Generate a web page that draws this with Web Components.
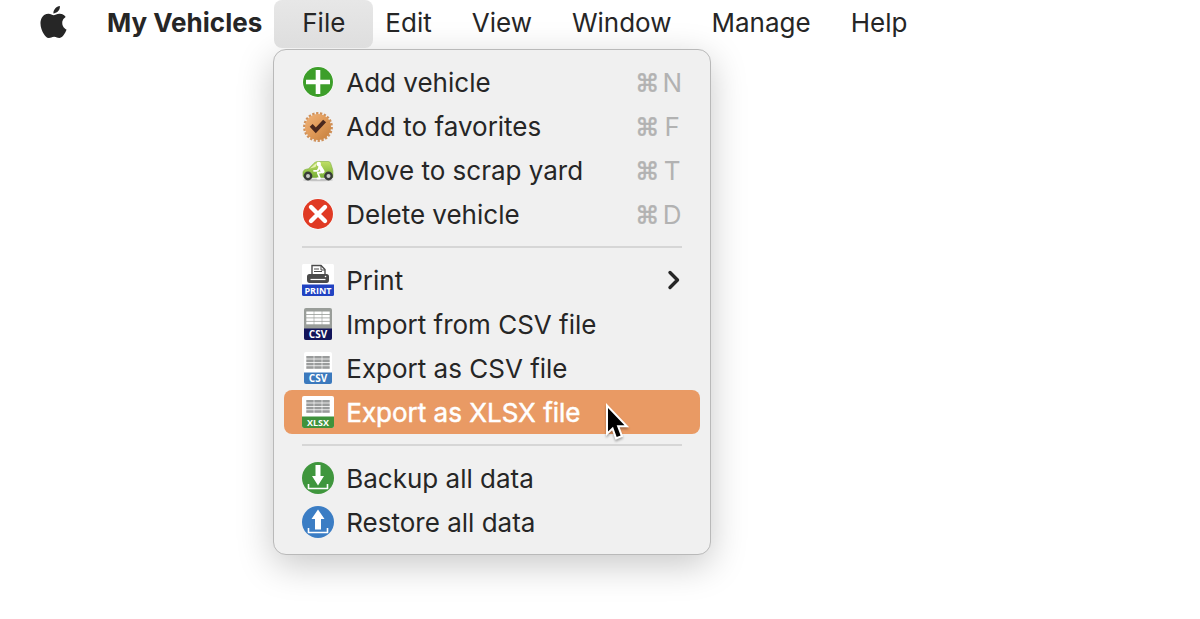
<!DOCTYPE html>
<html lang="en">
<head>
<meta charset="utf-8">
<meta name="viewport" content="width=device-width, initial-scale=1">
<title>My Vehicles</title>
<style>
  body {
    margin: 0;
    min-height: 100vh;
    background: #fff;
    color: #262626;
    font: 26px/44px Inter, "Liberation Sans", sans-serif;
  }
</style>
</head>
<body>
<menu-bar app="My Vehicles">
  <menu-title label="File" open>
    <drop-menu>
      <menu-item icon="add" key="N">Add vehicle</menu-item>
      <menu-item icon="favorite" key="F">Add to favorites</menu-item>
      <menu-item icon="scrap" key="T">Move to scrap yard</menu-item>
      <menu-item icon="delete" key="D">Delete vehicle</menu-item>
      <menu-rule></menu-rule>
      <menu-item icon="print" submenu>Print</menu-item>
      <menu-item icon="csv-in">Import from CSV file</menu-item>
      <menu-item icon="csv-out">Export as CSV file</menu-item>
      <menu-item icon="xlsx" active>Export as XLSX file</menu-item>
      <menu-rule></menu-rule>
      <menu-item icon="backup">Backup all data</menu-item>
      <menu-item icon="restore">Restore all data</menu-item>
    </drop-menu>
  </menu-title>
  <menu-title label="Edit"></menu-title>
  <menu-title label="View"></menu-title>
  <menu-title label="Window"></menu-title>
  <menu-title label="Manage"></menu-title>
  <menu-title label="Help"></menu-title>
</menu-bar>

<script>
const label = (text, size) =>
  `<text x="16" y="29.5" text-anchor="middle" font-family="Open Sans, sans-serif" font-weight="700" font-size="${size}" fill="#fff">${text}</text>`;

const cells = (fill, top) => [0, 3.4, 6.8, 10.2].map((y) =>
  [0, 8, 16].map((x) => `<rect x="${x + 4.3}" y="${y + top}" width="7.4" height="2.6" fill="${fill}"/>`).join("")
).join("");

const ICONS = {
  add: `<circle cx="16" cy="16" r="15.5" fill="#fff"/><circle cx="16" cy="16" r="15" fill="#3d9e2a"/>
    <path d="M16 4v24M4 16h24" stroke="#fff" stroke-width="4.6"/>`,
  favorite: `<defs><linearGradient id="g" x1="0" y1="0" x2="1" y2="1"><stop offset="0" stop-color="#f0b47c"/><stop offset=".5" stop-color="#e09a58"/><stop offset="1" stop-color="#c47e3c"/></linearGradient></defs>
    <circle cx="16" cy="17" r="13.4" fill="none" stroke="#cf9059" stroke-width="3" pathLength="88" stroke-dasharray="2.4 1.6"/>
    <circle cx="16" cy="17" r="13" fill="url(#g)"/>
    <path d="M9.200 15.400l4.600 5 8.800-9.400" fill="none" stroke="#4a281e" stroke-width="4"/>`,
  scrap: `<defs><linearGradient id="g" x1="0" y1="0" x2="0" y2="1"><stop offset="0" stop-color="#c0df66"/><stop offset="1" stop-color="#78b138"/></linearGradient></defs>
    <ellipse cx="16" cy="26" rx="15" ry="1.3" fill="#c4c4c4"/>
    <path d="M1 22v-4c.5-2 2-2.8 5.500-3.200L12 9.200C13.500 7.700 15 7.500 17 7.500h9c1.800 0 2.200.7 2.800 2.200L30.500 15c.6 2 .5 5.500.3 8.500H2z" fill="url(#g)" stroke="#7fae42" stroke-width=".6"/>
    <path d="M8 14.600l4.600-4.200c.8-.7 1.400-.9 2.200-.9L13.500 13z" fill="#e7f1b4"/>
    <circle cx="6" cy="22" r="4.4" fill="#383c38"/><circle cx="6" cy="22" r="2" fill="#c8ccc6"/>
    <circle cx="26.500" cy="22" r="4.4" fill="#383c38"/><circle cx="26.500" cy="22" r="2" fill="#c8ccc6"/>
    <circle cx="16.800" cy="10" r="2.200" fill="#fff"/>
    <path d="M18 13l2.800 4.500" stroke="#fff" stroke-width="3.6" stroke-linecap="round"/>
    <path d="M17.500 13.500l-2 3.300H12M20.500 18l-4.700 1 2.200 5.500h-2.500" fill="none" stroke="#fff" stroke-width="1.8" stroke-linejoin="round" stroke-linecap="round"/>`,
  delete: `<circle cx="16" cy="16" r="15.5" fill="#fff"/><circle cx="16" cy="16" r="15" fill="#e03a24"/>
    <path d="M9 9l14 14M23 9L9 23" stroke="#fff" stroke-width="4.4" stroke-linecap="round"/>`,
  print: `<rect width="32" height="32" rx="1.5" fill="#fff"/>
    <path d="M10 11V1.500h9l4 4V11z" fill="#fff" stroke="#4a4a4a" stroke-width="1.4"/>
    <path d="M19 1.500V6h4M12 5h5M12 7.500h8" fill="none" stroke="#4a4a4a"/>
    <path d="M5 12.500Q5 10 7.500 10h17q2.500 0 2.500 2.500V16q0 3-2.500 3h-17Q5 19 5 16z" fill="#4a4a4a"/>
    <path d="M8.500 15.500h15" stroke="#fff" stroke-width="1.2"/><circle cx="23.500" cy="12.500" r=".8" fill="#fff"/>
    <path d="M0 20.500h32v10q0 1.500-1.500 1.500h-29Q0 32 0 30.500z" fill="#2143c2"/>${label("PRINT", 9)}`,
  "csv-in": `<rect x="2" width="28" height="32" rx="2" fill="#999d99"/>${cells("#fff", 3.5)}
    <path d="M2 20.500h28V30q0 2-2 2H4q-2 0-2-2z" fill="#12145a"/>${label("CSV", 10)}`,
  "csv-out": `<rect x="2" width="28" height="32" rx="2" fill="#fff"/>${cells("#999b9b", 4)}
    <path d="M2 20.500h28V30q0 2-2 2H4q-2 0-2-2z" fill="#3b79bd"/>${label("CSV", 10)}`,
  xlsx: `<rect width="32" height="32" rx="2" fill="#fff"/>${cells("#999b9b", 4)}
    <path d="M0 20.500h32V30q0 2-2 2H2q-2 0-2-2z" fill="#3f923c"/>${label("XLSX", 9)}`,
  backup: `<circle cx="16" cy="16" r="16" fill="#3f963d"/>
    <path d="M13.500 3h5v11h3.500l-6 9.500L10 14h3.500z" fill="#fff"/>
    <path d="M6.500 22v4.500h19V22" fill="none" stroke="#fff" stroke-width="1.6"/>`,
  restore: `<circle cx="16" cy="16" r="16" fill="#3b7dc4"/>
    <path d="M13 23.500h6V13h3.500L16 3.500 9.500 13H13z" fill="#fff"/>
    <path d="M6.500 22v4.500h19V22" fill="none" stroke="#fff" stroke-width="1.6"/>`,
};

/** Top bar: logo, application name and the menu titles. */
class MenuBar extends HTMLElement {
  constructor() {
    super();
    this.attachShadow({ mode: "open" });
  }

  connectedCallback() {
    this.shadowRoot.innerHTML = `
      <style>
        :host { display: block; }
        nav { display: flex; align-items: center; gap: 40px; height: 48px; padding: 0 40px; }
        .logo { flex: none; width: 27px; height: 32px; margin-bottom: 4px; fill: #262626; }
        strong { font-weight: 700; line-height: 46px; height: 48px; white-space: nowrap; }
      </style>
      <nav>
        <svg class="logo" viewBox="2 0 20 24" aria-hidden="true">
          <path d="M12.152 6.896c-.948 0-2.415-1.078-3.960-1.040-2.040.027-3.910 1.183-4.961 3.014-2.117 3.675-.546 9.103 1.519 12.090 1.013 1.454 2.208 3.090 3.792 3.039 1.520-.065 2.090-.987 3.935-.987 1.831 0 2.350.987 3.960.948 1.637-.026 2.676-1.480 3.676-2.948 1.156-1.688 1.636-3.325 1.662-3.415-.039-.013-3.182-1.221-3.220-4.857-.026-3.040 2.480-4.494 2.597-4.559-1.429-2.090-3.623-2.324-4.390-2.376-2-.156-3.675 1.090-4.610 1.090zM15.530 3.830c.843-1.012 1.400-2.427 1.245-3.830-1.207.052-2.662.805-3.532 1.818-.780.896-1.454 2.338-1.273 3.714 1.338.104 2.715-.688 3.559-1.701"/>
        </svg>
        <strong>${this.getAttribute("app")}</strong>
        <slot></slot>
      </nav>
    `;
  }
}

/** One title of the bar; its menu is slotted and hangs below. */
class MenuTitle extends HTMLElement {
  constructor() {
    super();
    this.attachShadow({ mode: "open" });
  }

  connectedCallback() {
    const open = this.hasAttribute("open");
    this.shadowRoot.innerHTML = `
      <style>
        :host { display: block; position: relative; }
        :host([open]) { margin: 0 -28px; }
        button { display: block; height: 48px; padding: 0 0 2px; border: 0; background: none; color: inherit; font: inherit; }
        :host([open]) button { padding: 0 28px 2px; border-radius: 8px; background: linear-gradient(#e7e7e7, #dedede); position: relative; z-index: 1; }
        .menu { position: absolute; top: 49px; left: -1px; }
      </style>
      <button type="button" aria-expanded="${open}">${this.getAttribute("label")}</button>
      <div class="menu"><slot></slot></div>
    `;
  }
}

/** Panel that holds the menu items. */
class DropMenu extends HTMLElement {
  constructor() {
    super();
    this.attachShadow({ mode: "open" });
  }

  connectedCallback() {
    this.shadowRoot.innerHTML = `
      <style>
        :host {
          display: block; box-sizing: border-box; min-width: 438px; padding: 10px;
          border: 1px solid #b9b9b9; border-radius: 13px; background: #f0f0f0;
          box-shadow: 0 10px 36px rgba(0,0,0,0.22);
        }
      </style>
      <slot></slot>
    `;
  }
}

/** Menu row: icon, label, then a shortcut or a submenu arrow. */
class MenuItem extends HTMLElement {
  constructor() {
    super();
    this.attachShadow({ mode: "open" });
  }

  connectedCallback() {
    const key = this.getAttribute("key");
    let end = "";
    if (key) {
      end = `<span class="keys"><span class="cmd">⌘</span><span class="key">${key}</span></span>`;
    } else if (this.hasAttribute("submenu")) {
      end = `<svg class="arrow" viewBox="0 0 16 22"><path d="M4 3.500l7.500 7.500L4 18.500" fill="none" stroke="#262626" stroke-width="3.4" stroke-linecap="round" stroke-linejoin="round"/></svg>`;
    }
    const pointer = this.hasAttribute("active")
      ? `<svg class="pointer" viewBox="0 0 30 40"><path d="M4 6v23.500l5-4.700L12.700 35l3.900-1.600-3.900-10.100h7.800z" fill="#000" stroke="#fff" stroke-width="4" paint-order="stroke"/></svg>`
      : "";
    this.shadowRoot.innerHTML = `
      <style>
        :host { display: block; position: relative; }
        button {
          display: flex; align-items: center; gap: 12px; width: 100%; height: 44px; padding: 0 18px;
          border: 0; border-radius: 8px; background: none; color: inherit; font: inherit; text-align: left;
        }
        :host([active]) button { background: #e99a64; color: #fff; -webkit-text-stroke: 0.5px #fff; }
        :host([active]) .icon { -webkit-text-stroke: 0; }
        .icon { flex: none; width: 32px; height: 32px; }
        .label { flex: 1; padding-top: 2px; white-space: nowrap; }
        .keys { display: flex; gap: 3px; padding-top: 2px; color: #b2b2b2; }
        .cmd { font-size: 24px; -webkit-text-stroke: 0.5px #b2b2b2; }
        .key { width: 20px; text-align: center; }
        .arrow { width: 16px; height: 22px; }
        .pointer { position: absolute; left: 320px; top: 12px; width: 30px; height: 40px; z-index: 2; overflow: visible; filter: drop-shadow(0 2px 1px rgba(0,0,0,0.3)); }
      </style>
      <button type="button">
        <svg class="icon" viewBox="0 0 32 32" aria-hidden="true">${ICONS[this.getAttribute("icon")]}</svg>
        <span class="label"><slot></slot></span>
        ${end}
      </button>
      ${pointer}
    `;
  }
}

/** Line between groups of items. */
class MenuRule extends HTMLElement {
  constructor() {
    super();
    this.attachShadow({ mode: "open" });
  }

  connectedCallback() {
    this.shadowRoot.innerHTML = `
      <style>
        :host { display: block; padding: 10px 18px; }
        hr { margin: 0; border: 0; height: 2px; background: #d6d6d6; }
      </style>
      <hr>
    `;
  }
}

customElements.define("menu-bar", MenuBar);
customElements.define("menu-title", MenuTitle);
customElements.define("drop-menu", DropMenu);
customElements.define("menu-item", MenuItem);
customElements.define("menu-rule", MenuRule);
</script>
</body>
</html>
